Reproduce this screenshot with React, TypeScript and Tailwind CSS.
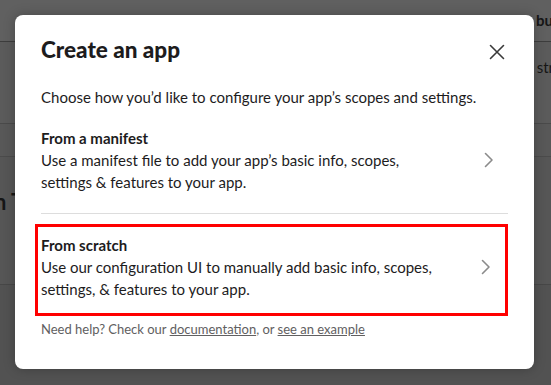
import React from "react";

// Chevron used on the option rows
const Chevron = () => (
  <svg width="10" height="16" viewBox="0 0 10 16" fill="none" className="shrink-0">
    <path d="M1.5 1.5L8 8l-6.5 6.5" stroke="#8b8b8b" strokeWidth="1.6" strokeLinecap="round" strokeLinejoin="round" />
  </svg>
);

type OptionProps = {
  title: string;
  desc: string;
};

const Option = ({ title, desc }: OptionProps) => (
  <div className="flex items-center justify-between">
    <div className="w-[402px]">
      <div className="text-[15px] leading-[22px] font-bold text-[#1d1c1d]">{title}</div>
      <div className="text-[15px] leading-[22px] text-[#1d1c1d]">{desc}</div>
    </div>
    <div className="pr-[14px]">
      <Chevron />
    </div>
  </div>
);

export default function App() {
  return (
    <div className="relative w-[551px] h-[385px] overflow-hidden bg-[#575757] font-['Lato','Liberation_Sans',sans-serif]">
      {/* dimmed page behind the modal */}
      <div className="flex flex-col text-[#161616]">
        <div className="h-[42px] bg-[#606060] border-b border-[#3d3d3d] flex items-center justify-end">
          <span className="text-[15px] font-bold mr-[-2px]">bu</span>
        </div>
        <div className="h-[82px] bg-[#5b5b5b] border-b border-[#4a4a4a] flex justify-end pt-[14px]">
          <span className="text-[15px] mr-[-3px]">str</span>
        </div>
        <div className="h-[33px] bg-[#585858] border-b border-[#4b4b4b]"></div>
        <div className="h-[128px] bg-[#565656] border-b border-[#474747] flex items-start pt-[28px]">
          <span className="text-[22px] font-bold ml-[-6px]">n T</span>
        </div>
        <div className="h-[100px] bg-[#525252]"></div>
      </div>

      {/* modal */}
      <div className="absolute left-[15px] top-[15px] w-[519px] h-[354px] bg-white rounded-[8px] shadow-[0_0_12px_rgba(0,0,0,0.25)] px-[26px] pt-[20px]">
        <div className="flex items-center justify-between h-[30px]">
          <h1 className="text-[22.5px] leading-[30px] font-black text-[#1d1c1d]">Create an app</h1>
          <svg width="16" height="16" viewBox="0 0 16 16" fill="none" className="mr-[3px] mt-[3px]">
            <path d="M1.5 1.5l13 13M14.5 1.5l-13 13" stroke="#3a3a3a" strokeWidth="1.6" strokeLinecap="round" />
          </svg>
        </div>

        <p className="mt-[21px] text-[15px] leading-[22px] text-[#1d1c1d]">
          Choose how you’d like to configure your app’s scopes and settings.
        </p>

        <div className="mt-[19px] pb-[20px] border-b border-[#dddddd]">
          <Option
            title="From a manifest"
            desc="Use a manifest file to add your app’s basic info, scopes, settings & features to your app."
          />
        </div>

        <div className="mt-[10px] ml-[-6px] border-[3px] border-[#ff0000] pl-[3px] pt-[7px] pb-[13px]">
          <Option
            title="From scratch"
            desc="Use our configuration UI to manually add basic info, scopes, settings, & features to your app."
          />
        </div>

        <p className="mt-[4px] text-[13px] leading-[18px] text-[#616061]">
          Need help? Check our <span className="underline">documentation</span>, or{" "}
          <span className="underline">see an example</span>
        </p>
      </div>
    </div>
  );
}
